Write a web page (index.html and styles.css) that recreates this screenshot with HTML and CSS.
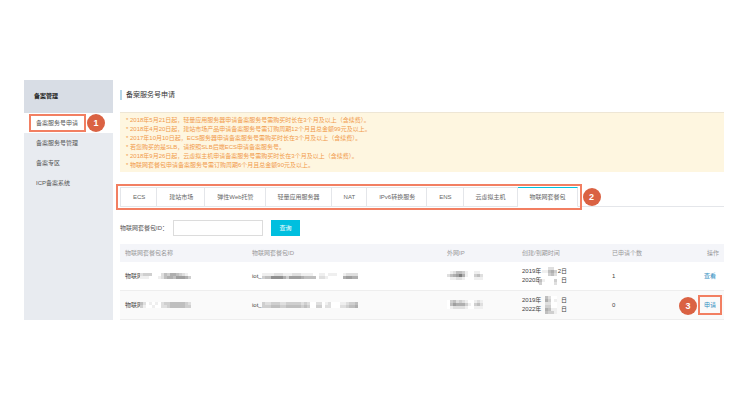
FILE: index.html
```html
<!DOCTYPE html>
<html lang="zh-CN">
<head>
<meta charset="utf-8">
<title>备案服务号申请</title>
<link rel="stylesheet" href="styles.css">
<script src="mosaic.js" defer></script>
</head>
<body>
<div class="layout">
  <nav class="sidebar">
    <h2 class="sidebar-title">备案管理</h2>
    <a class="nav-item active marked" href="#">备案服务号申请<span class="badge badge-nav">1</span></a>
    <a class="nav-item" href="#">备案服务号管理</a>
    <a class="nav-item" href="#">备案专区</a>
    <a class="nav-item" href="#">ICP备案系统</a>
  </nav>
  <main class="content">
    <h1 class="page-title">备案服务号申请</h1>
    <ul class="notice">
      <li>* 2018年5月21日起，轻量应用服务器申请备案服务号需购买时长在3个月及以上（含续费）。</li>
      <li>* 2018年4月20日起，建站市场产品申请备案服务号需订购周期12个月且总金额99元及以上。</li>
      <li>* 2017年10月10日起，ECS服务器申请备案服务号需购买时长在3个月及以上（含续费）。</li>
      <li>* 若您购买的是SLB，请按照SLB后端ECS申请备案服务号。</li>
      <li>* 2018年9月26日起，云虚拟主机申请备案服务号需购买时长在3个月及以上（含续费）。</li>
      <li>* 物联网套餐包申请备案服务号需订购周期6个月且总金额90元及以上。</li>
    </ul>
    <div class="tabs">
      <div class="tab-list">
        <button class="tab">ECS</button>
        <button class="tab">建站市场</button>
        <button class="tab">弹性Web托管</button>
        <button class="tab">轻量应用服务器</button>
        <button class="tab">NAT</button>
        <button class="tab">IPv6转换服务</button>
        <button class="tab">ENS</button>
        <button class="tab">云虚拟主机</button>
        <button class="tab current">物联网套餐包</button>
        <span class="badge badge-tabs">2</span>
      </div>
    </div>
    <form class="search">
      <label for="package-id">物联网套餐包ID：</label>
      <input id="package-id" type="text">
      <button type="button">查询</button>
    </form>
    <table class="packages">
      <colgroup><col class="col-name"><col><col class="col-ip"><col class="col-time"><col class="col-count"><col class="col-action"></colgroup>
      <thead>
        <tr><th>物联网套餐包名称</th><th>物联网套餐包ID</th><th>外网IP</th><th>创建/到期时间</th><th>已申请个数</th><th>操作</th></tr>
      </thead>
      <tbody>
        <tr>
          <td>物联网<svg class="mosaic after-name" data-rows="23330002435543210 11100012455466653"></svg></td>
          <td>iot_<svg class="mosaic" data-rows="11112221112221111001101110012222 34477775366665444402210000056655"></svg></td>
          <td><svg class="mosaic" data-rows="012443100110 245685100342 011221000111"></svg></td>
          <td>
            <div class="dates">
              <div class="date"><span>2019年</span><span>2日</span></div>
              <div class="date"><span>2020年</span><span>日</span></div>
              <svg class="mosaic over-dates" data-rows="..0220 .11453 .00342 .00000 410003 300002"></svg>
            </div>
          </td>
          <td>1</td>
          <td><a class="action" href="#">查看</a></td>
        </tr>
        <tr>
          <td>物联网<svg class="mosaic after-name" data-rows="42010102334444432 31001002234444433"></svg></td>
          <td>iot_<svg class="mosaic" data-rows="32233322333332320022012000112334 33344433444443430033022000223445"></svg></td>
          <td><svg class="mosaic" data-rows="034232100121 046555310342 012222100111"></svg></td>
          <td>
            <div class="dates">
              <div class="date"><span>2019年</span><span>日</span></div>
              <div class="date"><span>2022年</span><span>日</span></div>
              <svg class="mosaic over-dates" data-rows="..4200 ..5301 ..2200 ..3300 ..5411 ..4331"></svg>
            </div>
          </td>
          <td>0</td>
          <td><a class="action marked" href="#">申请<span class="badge badge-action">3</span></a></td>
        </tr>
      </tbody>
    </table>
  </main>
</div>
</body>
</html>
```

FILE: styles.css
```css
* { box-sizing: border-box; }
body { margin: 0; background: #fff; color: #555; font: 6px/9px "Liberation Sans", "Noto Sans CJK SC", sans-serif; }
a { color: inherit; text-decoration: none; }
button, input { font: inherit; }
.layout { display: flex; margin: 80px 26px 80px 24px; }
.sidebar { flex: 0 0 89px; background: #e8ebf0; }
.sidebar-title { margin: 0; padding: 0 10px; background: #d8dde5; color: #222; font-size: 6px; line-height: 33px; }
.nav-item { display: block; padding: 0 12px; line-height: 20px; }
.nav-item.active { background: #fff; }
.marked { position: relative; }
.marked::after { content: ""; position: absolute; border: 2px solid #f27f62; }
.nav-item.marked::after { inset: 1px 27px 1px 5px; }
.badge { position: absolute; width: 18px; height: 18px; border-radius: 50%; background: #da6243; color: #fff; font-size: 9px; font-weight: bold; line-height: 18px; text-align: center; }
.badge-nav { top: 1px; left: 63px; }
.content { flex: 1; min-width: 0; padding: 10px 0 0 7px; }
.page-title { margin: 0 0 12px; padding-left: 4px; border-left: 2px solid #b5d5e8; color: #333; font-size: 7px; font-weight: normal; line-height: 10px; }
.notice { margin: 0 0 15px; padding: 3px 6px 2px; border-top: 1px solid #eee6d5; background: #fef6e0; color: #f19a4b; list-style: none; }
.tabs { display: flex; border-bottom: 1px solid #e4e6ea; }
.tab-list { position: relative; display: flex; margin-bottom: -1px; }
.tab-list::after { content: ""; position: absolute; inset: -3px -4px; border: 2px solid #f27f62; pointer-events: none; }
.tab { height: 20px; padding: 0 11px 0 12px; border: solid #e4e6ea; border-width: 1px 1px 1px 0; background: #fff; color: #666; }
.tab:first-child { border-left-width: 1px; }
.tab.current { border-top-color: #00c1de; border-bottom-color: #fff; }
.badge-tabs { top: 1px; right: -23px; }
.search { display: flex; align-items: center; gap: 8px; margin: 13px 0 8px; }
.search label { width: 45px; white-space: nowrap; }
.search input { width: 90px; height: 16px; padding: 0 4px; border: 1px solid #dcdcdc; background: #fff; }
.search button { width: 29px; height: 16px; padding: 0; border: 0; background: #00bfdf; color: #fff; }
.packages { width: 100%; border-collapse: separate; border-spacing: 0; table-layout: fixed; }
.col-name { width: 127px; }
.col-ip { width: 75px; }
.col-time { width: 90px; }
.col-count { width: 77px; }
.col-action { width: 40px; }
.packages th { height: 18px; padding: 0 5px; background: #f4f5f9; color: #999; font-weight: normal; text-align: left; }
.packages td { height: 29px; padding: 0 5px; border-bottom: 1px solid #eee; color: #444; white-space: nowrap; }
.packages tr > :last-child { text-align: right; }
.packages td:last-child { padding-right: 8px; }
.packages tbody tr:last-child { background: #fafafa; }
.mosaic { vertical-align: middle; }
.after-name { margin-left: -3px; }
.dates { position: relative; width: 45px; }
.date { display: flex; justify-content: space-between; }
.over-dates { position: absolute; top: 0; left: 17px; }
.action { color: #2f8dc0; }
.action.marked { display: inline-block; }
.action.marked::after { inset: -6px -6px -5px; }
.badge-action { top: -4px; right: 19px; }
```

FILE: mosaic.js
```js
// Each digit is the darkness of one 3px cell; a dot leaves the cell empty.
const CELL = 3;
document.querySelectorAll(".mosaic").forEach((svg) => {
  const rows = svg.dataset.rows.split(" ");
  svg.setAttribute("width", rows[0].length * CELL);
  svg.setAttribute("height", rows.length * CELL);
  svg.setAttribute("shape-rendering", "crispEdges");
  rows.forEach((row, y) => [...row].forEach((level, x) => {
    if (level === ".") return;
    const shade = 255 - Number(level) * 16;
    const rect = document.createElementNS("http://www.w3.org/2000/svg", "rect");
    rect.setAttribute("x", x * CELL);
    rect.setAttribute("y", y * CELL);
    rect.setAttribute("width", CELL);
    rect.setAttribute("height", CELL);
    rect.setAttribute("fill", `rgb(${shade},${shade},${shade})`);
    svg.append(rect);
  }));
});
```
